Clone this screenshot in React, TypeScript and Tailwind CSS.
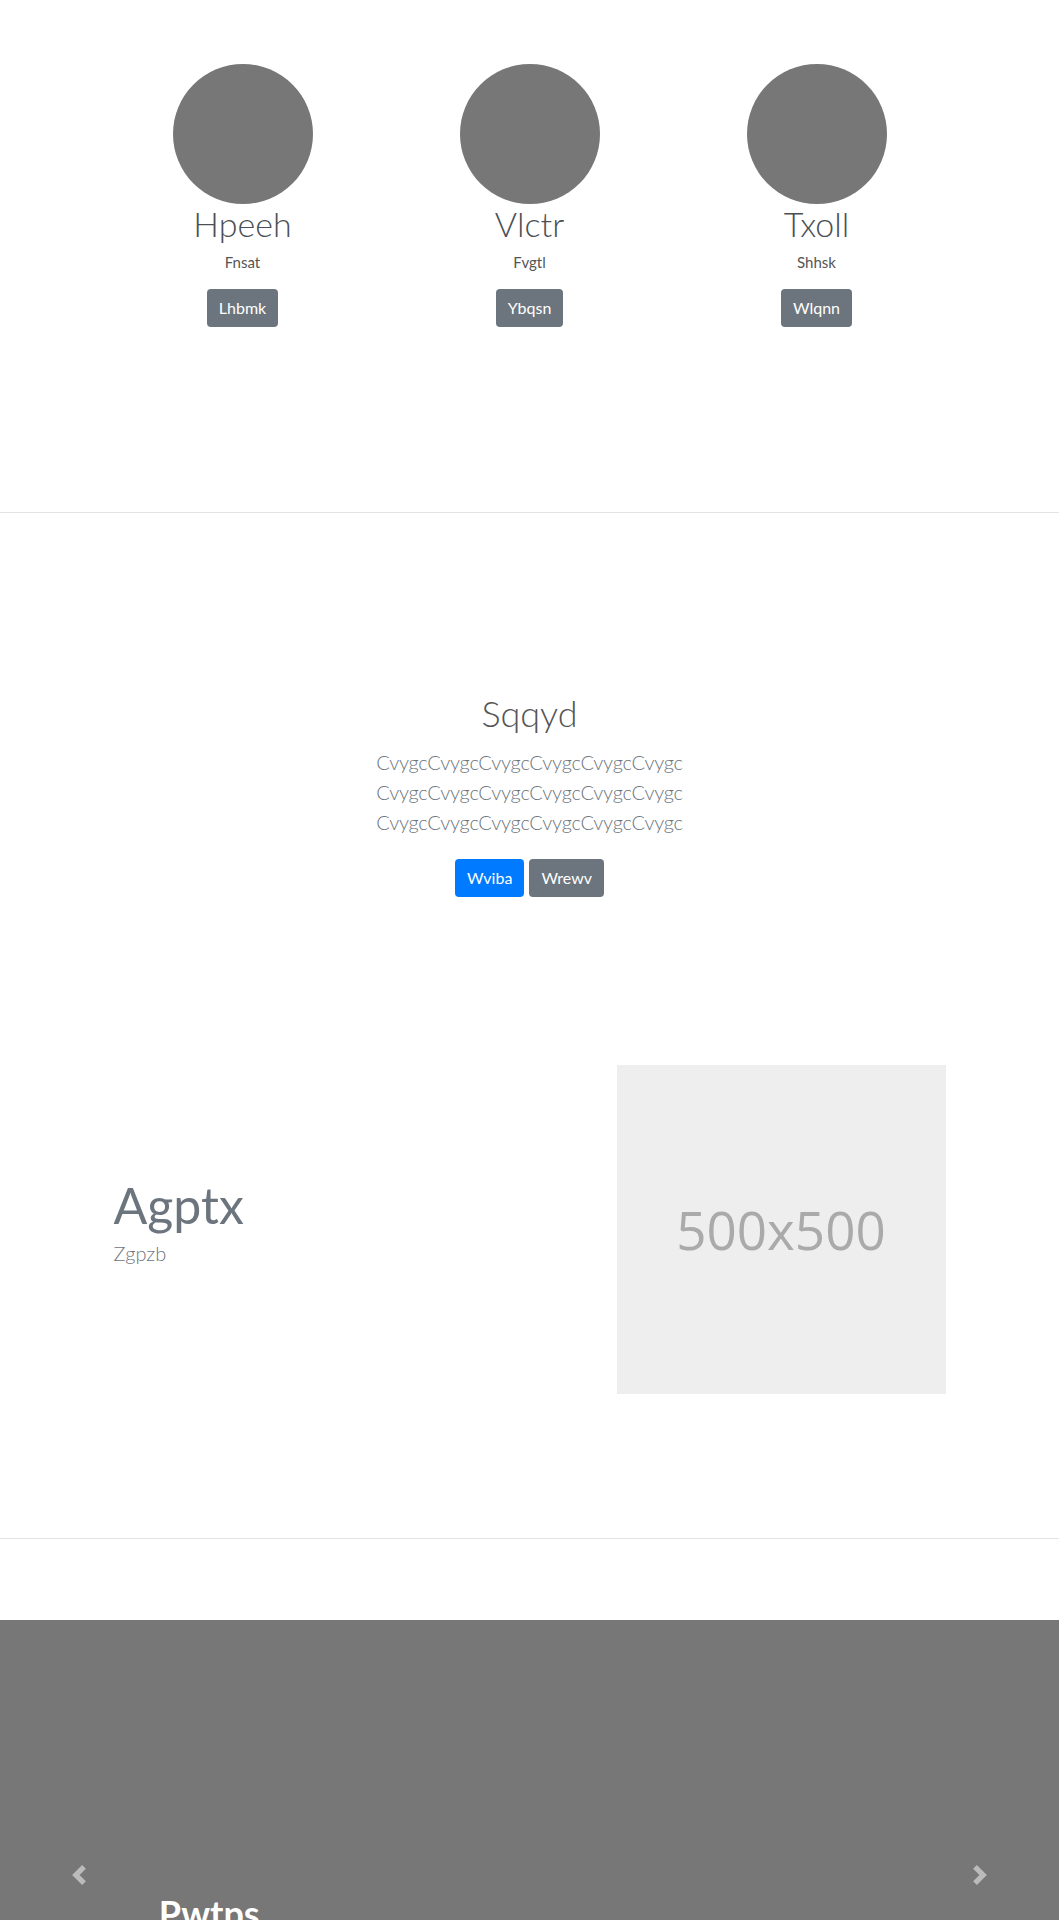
const team = [
  { name: "Hpeeh", role: "Fnsat", action: "Lhbmk" },
  { name: "Vlctr", role: "Fvgtl", action: "Ybqsn" },
  { name: "Txoll", role: "Shhsk", action: "Wlqnn" },
];

const Chevron: React.FC<{ dir: "left" | "right" }> = ({ dir }) => (
  <svg
    xmlns="http://www.w3.org/2000/svg"
    width="20"
    height="20"
    viewBox="0 0 8 8"
    fill="#fff"
    className="opacity-50"
  >
    {dir === "left" ? (
      <path d="M5.25 0l-4 4 4 4 1.5-1.5-2.5-2.5 2.5-2.5-1.5-1.5z" />
    ) : (
      <path d="M2.75 0l-1.5 1.5 2.5 2.5-2.5 2.5 1.5 1.5 4-4-4-4z" />
    )}
  </svg>
);

const App: React.FC = () => {
  return (
    <div className="min-h-[1920px] bg-white font-['Lato','Noto_Sans',sans-serif]">
      {/* team */}
      <section className="h-[513px] border-b border-[#e3e3e3] pt-[64px]">
        <div className="mx-auto grid w-[861px] grid-cols-3">
          {team.map((m) => (
            <div key={m.name} className="flex flex-col items-center">
              <div className="h-[140px] w-[140px] rounded-full bg-[#777777]" />
              <h2 className="text-[34px] leading-[1.2] font-light text-[#4a4f55]">
                {m.name}
              </h2>
              <p className="mt-[6px] text-[15px] leading-[1.5] text-[#555]">
                {m.role}
              </p>
              <button className="mt-[16px] h-[38px] rounded-[4px] bg-[#6c757d] px-3 text-[16px] text-white">
                {m.action}
              </button>
            </div>
          ))}
        </div>
      </section>

      <section className="border-b border-[#e3e3e3] pt-[179px] pb-[144px]">
        {/* intro */}
        <div className="flex flex-col items-center text-center">
          <h1 className="text-[36px] leading-[1.2] font-light text-[#555]">
            Sqqyd
          </h1>
          <div className="mt-3 text-[20px] leading-[30px] font-light tracking-[-0.25px] text-[#6c757d]">
            <p>CvygcCvygcCvygcCvygcCvygcCvygc</p>
            <p>CvygcCvygcCvygcCvygcCvygcCvygc</p>
            <p>CvygcCvygcCvygcCvygcCvygcCvygc</p>
          </div>
          <div className="mt-[22px] flex gap-[5px]">
            <button className="h-[38px] rounded-[4px] bg-[#007bff] px-3 text-[16px] text-white">
              Wviba
            </button>
            <button className="h-[38px] rounded-[4px] bg-[#6c757d] px-3 text-[16px] text-white">
              Wrewv
            </button>
          </div>
        </div>

        {/* feature */}
        <div className="mx-auto mt-[168px] grid w-[832px] grid-cols-2">
          <div className="flex flex-col justify-center">
            <h1 className="text-[50px] leading-[1.2] font-normal text-[#6c757d]">
              Agptx
            </h1>
            <p className="mt-[3px] mb-4 text-[20px] leading-[30px] font-light text-[#6c757d]">
              Zgpzb
            </p>
          </div>
          <div className="flex justify-end">
            <div className="flex h-[329px] w-[329px] items-center justify-center bg-[#eeeeee] font-['Open_Sans',sans-serif] text-[53px] text-[#aaaaaa]">
              500x500
            </div>
          </div>
        </div>
      </section>

      {/* carousel */}
      <section className="mt-[81px]">
        <div className="relative h-[510px] overflow-hidden bg-[#777777]">
          <div className="pt-[272px] pl-[15%]">
            <h3 className="text-[36px] leading-[1.2] font-bold text-white">
              Pwtps
            </h3>
          </div>
          <div className="absolute inset-y-0 left-0 flex w-[15%] items-center justify-center">
            <Chevron dir="left" />
          </div>
          <div className="absolute inset-y-0 right-0 flex w-[15%] items-center justify-center">
            <Chevron dir="right" />
          </div>
        </div>
      </section>
    </div>
  );
};

export default App;
